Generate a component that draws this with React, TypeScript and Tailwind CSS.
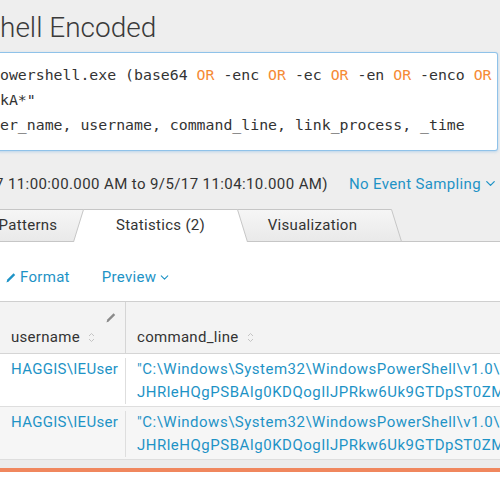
import React from 'react';
import { ChevronDown } from 'lucide-react';

const CMD_1 = String.raw`"C:\Windows\System32\WindowsPowerShell\v1.0\powershell.exe" -enc`;
const CMD_2 = String.raw`JHRleHQgPSBAIg0KDQogIlJPRkw6Uk9GTDpST0ZMOlJPRkwiDQo`;

const Or = () => <span className="text-[#f58b36]">OR</span>;

const SearchBox = () => (
  <div className="-ml-[2px] w-[500px] rounded-r-[3px] border-y border-r border-[#8fc2e9] bg-white pb-[12px] pl-[2px] pt-[10px] font-['DejaVu_Sans_Mono',monospace] text-[14.85px] leading-[25px] text-[#333] shadow-[0_1px_3px_rgba(120,180,230,0.45)]">
    <div className="overflow-hidden whitespace-pre">
      owershell.exe (base64 <Or /> -enc <Or /> -ec <Or /> -en <Or /> -enco <Or />{' '}
    </div>
    <div className="whitespace-pre">kA*"</div>
    <div className="whitespace-pre">er_name, username, command_line, link_process, _time</div>
  </div>
);

type TabProps = {
  label: string;
  active?: boolean;
  className: string;
  width: number;
};

const Tab = ({ label, active, className, width }: TabProps) => (
  <div className={`relative -mb-px flex h-[33px] items-center justify-center ${className}`}>
    <svg className="absolute inset-0" width={width} height={33}>
      <defs>
        <linearGradient id="tabg" x1="0" y1="0" x2="0" y2="1">
          <stop offset="0" stopColor="#f6f6f6" />
          <stop offset="1" stopColor="#e9e9e9" />
        </linearGradient>
      </defs>
      {active ? (
        <>
          <path d={`M0.5 33 L10.5 0.5 L${width - 10.5} 0.5 L${width - 0.5} 33 Z`} fill="#fff" />
          <path
            d={`M0.5 33 L10.5 0.5 L${width - 10.5} 0.5 L${width - 0.5} 33`}
            fill="none"
            stroke="#c6c6c6"
          />
        </>
      ) : (
        <polygon
          points={`10.5,0.5 ${width - 10.5},0.5 ${width - 0.5},32.5 0.5,32.5`}
          fill="url(#tabg)"
          stroke="#c6c6c6"
        />
      )}
    </svg>
    <span className="relative whitespace-nowrap text-[15px] tracking-[0.3px] text-[#333]">{label}</span>
  </div>
);

const Tabs = () => (
  <div className="flex h-[33px] items-end border-b border-[#c6c6c6]">
    <Tab label="Patterns" width={172} className="-ml-[58px] w-[172px]" />
    <Tab label="Statistics (2)" width={175} active className="z-10 -ml-[41px] w-[175px]" />
    <Tab label="Visualization" width={179} className="-ml-[25px] w-[179px]" />
  </div>
);

const SortIcon = () => (
  <svg width="7" height="11" viewBox="0 0 7 11" className="ml-[8px]">
    <path d="M1 4 L3.5 1.5 L6 4 M1 7 L3.5 9.5 L6 7" fill="none" stroke="#c4c4c4" strokeWidth="1" />
  </svg>
);

const PencilIcon = ({ color, className }: { color: string; className?: string }) => (
  <svg width="10" height="11" viewBox="0 0 10 11" className={className}>
    <path d="M0.5 10.5 L1.3 7.6 L7.6 1.3 L9.2 2.9 L2.9 9.2 Z" fill={color} />
  </svg>
);

type Row = { user: string; striped?: boolean };

const rows: Row[] = [{ user: String.raw`HAGGIS\IEUser` }, { user: String.raw`HAGGIS\IEUser`, striped: true }];

export default function App() {
  return (
    <div className="h-[500px] w-[500px] overflow-hidden bg-[#eeeeee] font-['Roboto',sans-serif] text-[#333]">
      <div className="flex h-[52px] items-center pt-[3px]">
        <h1 className="whitespace-nowrap text-[28px] font-light leading-none text-[#3a3a3a]">hell Encoded</h1>
      </div>

      <SearchBox />

      <div className="flex h-[58px] items-center justify-between pr-[2px] pt-[7px] text-[15px] leading-[20px]">
        <span className="-ml-[5px] whitespace-nowrap tracking-[0.4px]">
          7 11:00:00.000 AM to 9/5/17 11:04:10.000 AM)
        </span>
        <span className="flex items-center gap-[2px] whitespace-nowrap tracking-[0.35px] text-[#1e93c6]">
          No Event Sampling
          <ChevronDown size={15} strokeWidth={2} />
        </span>
      </div>

      <Tabs />

      <div className="bg-white">
        <div className="flex h-[59px] items-end gap-[32px] pb-[14px] pl-[6px] text-[15px] leading-[20px] tracking-[0.3px] text-[#1e93c6]">
          <span className="flex items-center gap-[4px]">
            <PencilIcon color="#1e93c6" />
            Format
          </span>
          <span className="flex items-center gap-[2px]">
            Preview
            <ChevronDown size={13} strokeWidth={2} />
          </span>
        </div>

        <div className="border-t border-[#cfcfcf] text-[15px] tracking-[0.3px]">
          <div className="flex h-[52px] border-b border-[#d5d5d5] bg-[#f3f3f3]">
            <div className="relative flex w-[126px] shrink-0 items-center border-r border-[#d5d5d5] pl-[11px] pt-[20px]">
              username
              <SortIcon />
              <PencilIcon color="#8a8a8a" className="absolute right-[9px] top-[10px]" />
            </div>
            <div className="flex items-center pl-[11px] pt-[20px]">
              command_line
              <SortIcon />
            </div>
          </div>

          {rows.map((row, i) => (
            <div
              key={i}
              className={`flex border-b border-[#dedede] pb-[2px] pt-[4px] leading-[23px] text-[#1e93c6] ${
                row.striped ? 'bg-[#f6f6f6]' : 'bg-white'
              }`}
            >
              <div className="w-[126px] shrink-0 border-r border-[#dedede] pl-[11px]">{row.user}</div>
              <div className="min-w-0 flex-1 overflow-hidden pl-[11px] tracking-[0.5px]">
                <div className="whitespace-nowrap">{CMD_1}</div>
                <div className="whitespace-nowrap">{CMD_2}</div>
              </div>
            </div>
          ))}
        </div>

        <div className="h-[8px] bg-[#ececec]" />
        <div className="h-[4px] bg-[#f0875e]" />
        <div className="h-[40px] bg-white" />
      </div>
    </div>
  );
}
